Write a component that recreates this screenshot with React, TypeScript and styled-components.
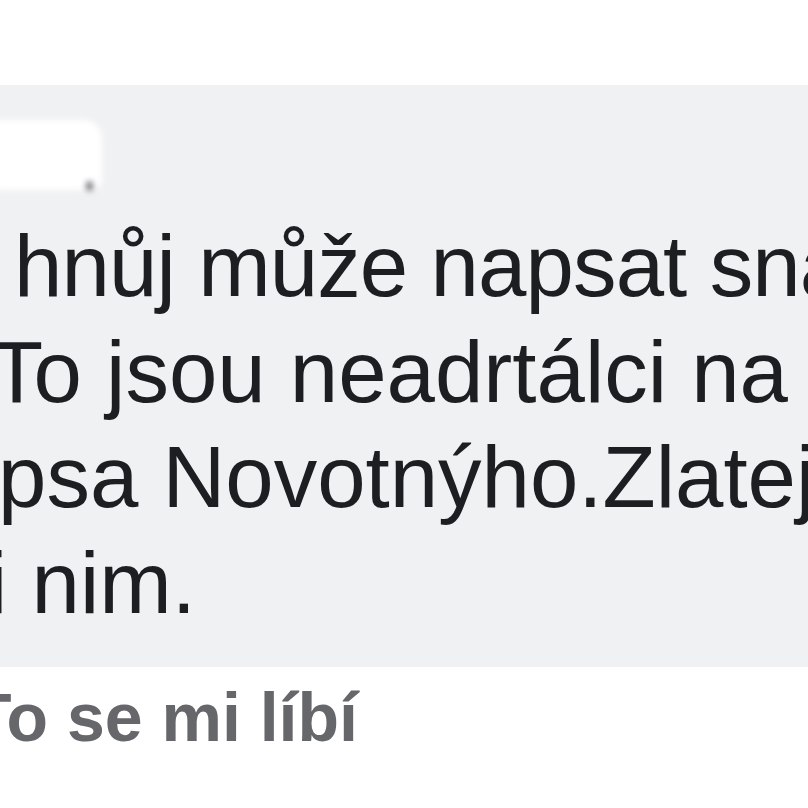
import styled, { createGlobalStyle } from 'styled-components';

const GlobalStyle = createGlobalStyle`
  html, body {
    margin: 0;
    padding: 0;
    background: #ffffff;
    overflow: hidden;
  }
`;

const Page = styled.div`
  width: 808px;
  height: 808px;
  padding-top: 85px;
  box-sizing: border-box;
  overflow: hidden;
  font-family: 'Liberation Sans', Helvetica, Arial, sans-serif;
`;

const Bubble = styled.div`
  height: 582px;
  box-sizing: border-box;
  padding-top: 35px;
  background: #f0f1f3;
  overflow: hidden;
`;

// the author's name was whited out in the screenshot
const NameMask = styled.div`
  position: relative;
  width: 108px;
  height: 70px;
  margin-left: -6px;
  background: #ffffff;
  border-radius: 0 18px 10px 0;
  filter: blur(3px);
`;

const MaskSpeck = styled.span`
  position: absolute;
  right: 10px;
  bottom: 0;
  width: 5px;
  height: 8px;
  background: #3a3b3d;
`;

const Message = styled.div`
  margin-top: 23px;
  font-size: 87px;
  line-height: 105.7px;
  color: #1c1e21;
`;

const Line = styled.div<{ $indent: number; $tracking?: number }>`
  white-space: nowrap;
  margin-left: ${(p) => p.$indent}px;
  letter-spacing: ${(p) => p.$tracking ?? 0}px;
`;

const Actions = styled.div`
  margin-top: 10px;
  margin-left: -30px;
  font-size: 68px;
  line-height: 80px;
  font-weight: 700;
  color: #65676b;
  white-space: nowrap;
`;

const lines = [
  { text: 'hnůj může napsat snad', indent: 14, tracking: -0.9 },
  { text: 'To jsou neadrtálci na', indent: -10 },
  { text: 'psa Novotnýho.Zlatej', indent: -2 },
  { text: 'i nim.', indent: -12 },
];

const App = () => {
  return (
    <Page>
      <GlobalStyle />
      <Bubble>
        <NameMask>
          <MaskSpeck />
        </NameMask>
        <Message>
          {lines.map((l) => (
            <Line key={l.text} $indent={l.indent} $tracking={l.tracking}>
              {l.text}
            </Line>
          ))}
        </Message>
      </Bubble>
      <Actions>To se mi líbí</Actions>
    </Page>
  );
};

export default App;
